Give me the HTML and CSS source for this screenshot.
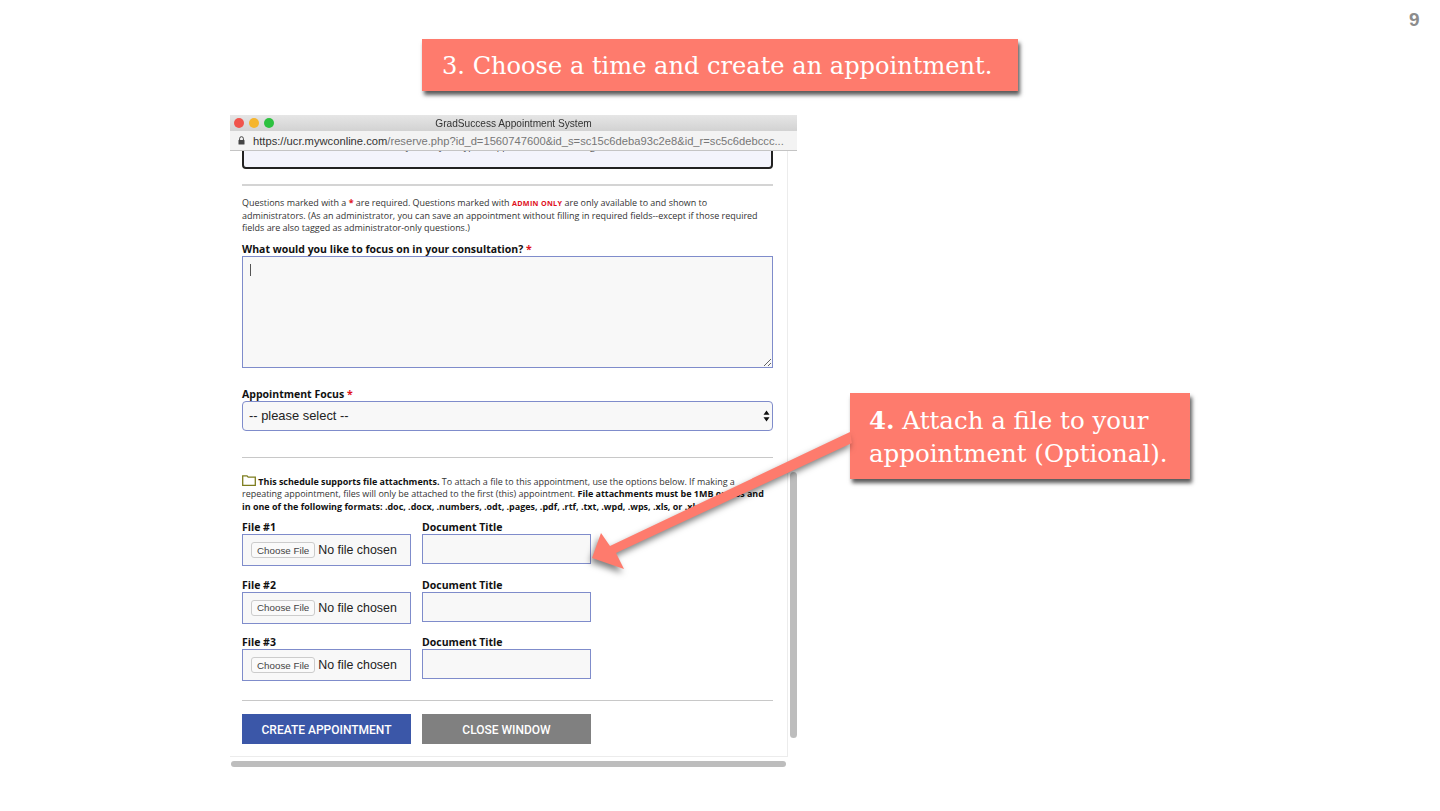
FILE: index.html
```html
<!DOCTYPE html>
<html lang="en">
<head>
  <meta charset="UTF-8" />
  <title>GradSuccess Appointment System</title>
  <link rel="stylesheet" href="styles.css">
</head>
<body>
  <div class="slide">
    <div class="page-num">9</div>
    <div class="callout callout-top">3. Choose a time and create an appointment.</div>

    <div class="window">
      <div class="titlebar">
        <span class="light red"></span>
        <span class="light yellow"></span>
        <span class="light green"></span>
        <span class="title">GradSuccess Appointment System</span>
      </div>
      <div class="urlbar">
        <svg class="lock" width="7" height="9" viewBox="0 0 7 9">
          <path d="M1.6 4V2.6a1.9 1.9 0 0 1 3.8 0V4" fill="none" stroke="#444" stroke-width="1"/>
          <rect x="0.5" y="4" width="6" height="4.5" rx="0.6" fill="#444"/>
        </svg>
        <span class="url"><span class="host">https://ucr.mywconline.com</span>/reserve.php?id_d=1560747600&amp;id_s=sc15c6deba93c2e8&amp;id_r=sc5c6debccc...</span>
      </div>

      <div class="viewport">
        <div class="cut-box">You may select your type of appointment and arrange</div>
        <hr class="rule thick">
        <p class="note">Questions marked with a <span class="req">*</span> are required. Questions marked with <span class="admin">ADMIN ONLY</span> are only available to and shown to administrators. (As an administrator, you can save an appointment without filling in required fields--except if those required fields are also tagged as administrator-only questions.)</p>

        <label class="field-label focus-label">What would you like to focus on in your consultation? <span class="req">*</span></label>
        <div class="textarea-wrap">
          <textarea class="focus-text"></textarea>
          <span class="caret"></span>
        </div>

        <label class="field-label select-label">Appointment Focus <span class="req">*</span></label>
        <div class="select-wrap">
          <select class="focus-select">
            <option>-- please select --</option>
          </select>
          <svg class="select-arrows" width="7" height="12" viewBox="0 0 7 12">
            <path d="M3.5 0.5 L6.5 4.8 H0.5 Z M3.5 11.5 L6.5 7.2 H0.5 Z" fill="#111"/>
          </svg>
        </div>

        <hr class="rule attach-rule">
        <p class="note attach-note">
          <svg class="folder" width="14" height="11" viewBox="0 0 14 11">
            <path d="M0.7 10.3V0.8H5L6.2 2.2H13.3V10.3Z" fill="#fff" stroke="#7d7d1e" stroke-width="1.3"/>
          </svg>
          <b>This schedule supports file attachments.</b> To attach a file to this appointment, use the options below. If making a repeating appointment, files will only be attached to the first (this) appointment. <b>File attachments must be 1MB or less and in one of the following formats: .doc, .docx, .numbers, .odt, .pages, .pdf, .rtf, .txt, .wpd, .wps, .xls, or .xlsx.</b>
        </p>

        <div class="file-rows">
          <div class="file-row">
            <div>
              <label class="field-label">File #1</label>
              <input class="file-input" type="file">
            </div>
            <div>
              <label class="field-label">Document Title</label>
              <input class="doc-title" type="text">
            </div>
          </div>
          <div class="file-row">
            <div>
              <label class="field-label">File #2</label>
              <input class="file-input" type="file">
            </div>
            <div>
              <label class="field-label">Document Title</label>
              <input class="doc-title" type="text">
            </div>
          </div>
          <div class="file-row">
            <div>
              <label class="field-label">File #3</label>
              <input class="file-input" type="file">
            </div>
            <div>
              <label class="field-label">Document Title</label>
              <input class="doc-title" type="text">
            </div>
          </div>
        </div>

        <hr class="rule buttons-rule">
        <div class="buttons">
          <button class="btn btn-create">CREATE APPOINTMENT</button>
          <button class="btn btn-close">CLOSE WINDOW</button>
        </div>
      </div>

      <div class="scroll-v"></div>
    </div>
    <div class="scroll-h"></div>

    <div class="callout callout-side"><b>4.</b> Attach a file to your appointment (Optional).</div>

    <svg class="arrow" width="1440" height="811" viewBox="0 0 1440 811">
      <path d="M850 432 L852 443 L616 553 L624 569 L592 558 L601 533 L610 546 Z" fill="#fe7b6d"/>
    </svg>
  </div>
</body>
</html>
```

FILE: styles.css
```css
body {
  margin: 0;
  background: #fff;
  font-family: 'Open Sans', sans-serif;
  color: #111;
}
.slide {
  position: relative;
  width: 1440px;
  height: 811px;
  overflow: hidden;
  background: #fff;
}
.page-num {
  position: absolute;
  top: 9px;
  left: 1409px;
  font-family: 'Liberation Sans', sans-serif;
  font-size: 19px;
  font-weight: bold;
  color: #8c8c8c;
}
.callout {
  position: absolute;
  box-sizing: border-box;
  background: #fe7b6d;
  color: #fff;
  font-family: 'DejaVu Serif', serif;
  box-shadow: 2px 4px 4px rgba(0,0,0,0.65);
}
.callout-top {
  left: 422px;
  top: 39px;
  width: 596px;
  height: 52px;
  padding: 10px 0 0 20px;
  font-size: 24.1px;
  line-height: 34px;
  white-space: nowrap;
}
.callout-side {
  left: 850px;
  top: 393px;
  width: 340px;
  height: 86px;
  padding: 11px 0 0 19px;
  font-size: 24.5px;
  line-height: 33px;
}
.arrow {
  position: absolute;
  left: 0;
  top: 0;
  filter: drop-shadow(-2px 4px 3px rgba(0,0,0,0.5));
}

/* browser window */
.window {
  position: absolute;
  left: 230px;
  top: 115px;
  width: 567px;
  height: 642px;
  filter: blur(0.3px);
}
.titlebar {
  position: relative;
  display: flex;
  align-items: center;
  gap: 5px;
  height: 16px;
  padding-left: 4px;
  background: linear-gradient(#e6e6e6, #d2d2d2);
}
.light {
  width: 10px;
  height: 10px;
  border-radius: 50%;
}
.light.red { background: #f0544c; }
.light.yellow { background: #f5b52e; }
.light.green { background: #2cc13f; }
.title {
  position: absolute;
  left: 0;
  right: 0;
  text-align: center;
  font-family: 'Liberation Sans', sans-serif;
  font-size: 10.15px;
  color: #333;
}
.urlbar {
  display: flex;
  align-items: center;
  gap: 8px;
  height: 20px;
  padding-left: 8px;
  box-sizing: border-box;
  background: #f3f3f3;
  border-bottom: 1px solid #c4c4c4;
  font-family: 'Liberation Sans', sans-serif;
  font-size: 11.2px;
  color: #777;
  white-space: nowrap;
}
.host { color: #333; }
.viewport {
  box-sizing: border-box;
  width: 558px;
  height: 606px;
  padding: 0 14px 0 12px;
  overflow: hidden;
  background: #fff;
  border-right: 1px solid #ececec;
  border-bottom: 1px solid #ececec;
}
.cut-box {
  box-sizing: border-box;
  height: 40px;
  margin-top: -22px;
  padding: 10px 0 0 130px;
  background: #f3f4fc;
  border: 2px solid #222;
  border-radius: 4px;
  font-size: 9px;
  line-height: 12px;
  color: #333;
}
.rule {
  margin: 0;
  border: 0;
  height: 1px;
  background: #c8c8c8;
}
.rule.thick {
  margin-top: 15px;
  height: 2px;
  background: #d4d4d4;
}
.note {
  margin: 11px 0 0;
  font-size: 8.96px;
  line-height: 12.6px;
  color: #333;
}
.note b { color: #111; }
.req {
  color: #e0101c;
  font-weight: bold;
}
.admin {
  color: #e0101c;
  font-size: 7.2px;
  font-weight: bold;
  letter-spacing: 0.3px;
}
.field-label {
  display: block;
  height: 14px;
  font-size: 10.5px;
  line-height: 14px;
  font-weight: bold;
  color: #111;
}
.focus-label { margin-top: 7.5px; }
.select-label { margin-top: 19px; }
.textarea-wrap { position: relative; }
.focus-text {
  display: block;
  box-sizing: border-box;
  width: 100%;
  height: 112px;
  background: #f8f8f8;
  border: 1px solid #7f8ccb;
  border-radius: 0;
  outline: none;
}
.caret {
  position: absolute;
  left: 8px;
  top: 8px;
  width: 1px;
  height: 12px;
  background: #555;
}
.select-wrap { position: relative; }
.focus-select {
  display: block;
  box-sizing: border-box;
  width: 100%;
  height: 30px;
  padding: 0 6px 1px;
  appearance: none;
  background: #f8f8f8;
  border: 1px solid #7f8ccb;
  border-radius: 4px;
  font-family: 'Liberation Sans', sans-serif;
  font-size: 12.9px;
  color: #222;
}
.select-arrows {
  position: absolute;
  right: 3px;
  top: 9px;
}
.attach-rule { margin-top: 26px; }
.attach-note { margin-top: 16.5px; }
.folder {
  vertical-align: -1px;
}
.file-rows {
  display: flex;
  flex-direction: column;
  gap: 11.5px;
  margin-top: 6.5px;
}
.file-row {
  display: grid;
  grid-template-columns: 169px 169px;
  gap: 11px;
}
.file-input {
  display: block;
  box-sizing: border-box;
  width: 169px;
  height: 32px;
  padding: 7px 0 0 8px;
  background: #f8f8f8;
  border: 1px solid #7f8ccb;
  font-family: 'Liberation Sans', sans-serif;
  font-size: 12.4px;
  color: #222;
}
.file-input::file-selector-button {
  height: 16px;
  margin-right: 3px;
  padding: 0 5px;
  background: #fafafa;
  border: 1px solid #ccc;
  border-radius: 3px;
  font-family: 'Liberation Sans', sans-serif;
  font-size: 9.8px;
  color: #444;
}
.doc-title {
  display: block;
  box-sizing: border-box;
  width: 169px;
  height: 30px;
  background: #f8f8f8;
  border: 1px solid #7f8ccb;
  border-radius: 0;
}
.buttons-rule { margin-top: 19px; }
.buttons {
  display: flex;
  gap: 11px;
  margin-top: 13px;
}
.btn {
  width: 169px;
  height: 30px;
  padding: 1px 0 0;
  border: 0;
  color: #fff;
  font-family: Roboto, sans-serif;
  font-size: 12px;
  font-weight: 500;
}
.btn-create { background: #3b57a8; }
.btn-close { background: #808080; }

/* scrollbars sit on top of the page */
.scroll-v {
  position: absolute;
  left: 560px;
  top: 357px;
  width: 7px;
  height: 266px;
  border-radius: 4px;
  background: #bdbdbd;
}
.scroll-h {
  position: absolute;
  left: 231px;
  top: 761px;
  width: 555px;
  height: 6px;
  border-radius: 3px;
  background: #bdbdbd;
}
```
